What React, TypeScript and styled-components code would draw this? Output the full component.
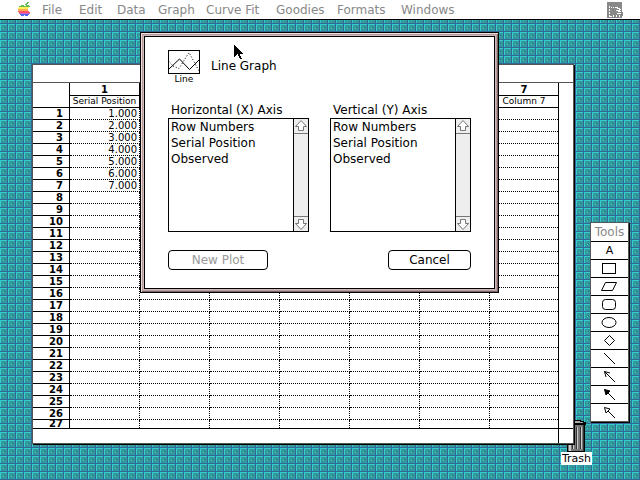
import React from 'react';
import styled, { createGlobalStyle } from 'styled-components';

const GlobalStyle = createGlobalStyle`
  * { box-sizing: border-box; }
  body { margin: 0; background: #339999; }
  button, select { font: inherit; color: inherit; }
`;

const uiFont = '"DejaVu Sans", sans-serif';

const tile = encodeURIComponent(
  '<svg xmlns="http://www.w3.org/2000/svg" width="8" height="8" shape-rendering="crispEdges">' +
    '<path fill="#339999" d="M0 0h8v8H0z"/>' +
    '<path fill="#33cccc" d="M0 0h7v1H0zM0 0h1v7H0z"/>' +
    '<path fill="#336699" d="M7 0h1v8H7zM0 7h8v1H0zM4 3h1v1H4z"/>' +
    '<path fill="#33cccc" d="M3 4h1v1H3z"/>' +
  '</svg>',
);

const Desktop = styled.div`
  position: relative;
  min-height: 100vh;
  overflow: hidden;
  font: 12px/16px ${uiFont};
  color: #000;
  background: #339999 url("data:image/svg+xml,${tile}") 0 0 / 8px 8px;
`;

const MenuBar = styled.nav`
  display: flex;
  align-items: center;
  height: 20px;
  padding: 0 17px 0 18px;
  background: #fff;
  border-bottom: 1px solid #000;
`;

const MenuButton = styled.button<{ $width: number }>`
  flex: 0 0 ${(p) => p.$width}px;
  padding: 0;
  border: 0;
  background: none;
  color: #888;
  text-align: left;
  white-space: nowrap;
`;

const AppleIcon = styled.svg`
  flex: none;
  margin-right: 11px;
`;

const AppIcon = styled.svg`
  flex: none;
  margin-left: auto;
`;

const DataWindow = styled.section`
  position: absolute;
  z-index: 2;
  left: 32px;
  top: 64px;
  right: 66px;
  bottom: 36px;
  display: flex;
  flex-direction: column;
  background: #fff;
  border: 1px solid #555;
  box-shadow: 1px 1px 0 #000;
`;

const WindowTitle = styled.header`
  flex: 0 0 18px;
  border-bottom: 1px solid #555;
`;

const SheetArea = styled.div`
  flex: 1;
  min-height: 0;
  display: flex;
  border-bottom: 1px solid #000;
`;

const SheetClip = styled.div`
  flex: 1;
  min-width: 0;
  overflow: hidden;
`;

const SideTrack = styled.div`
  flex: 0 0 15px;
  border-left: 1px solid #000;
`;

const BottomTrack = styled.footer`
  flex: 0 0 14px;
  display: flex;
  justify-content: flex-end;
`;

const Sheet = styled.table`
  width: 100%;
  table-layout: fixed;
  border-collapse: separate;
  border-spacing: 0;
  font-size: 10px;
  line-height: 11px;
  white-space: nowrap;
`;

const Col = styled.col<{ $width?: number }>`
  width: ${(p) => (p.$width ? `${p.$width}px` : 'auto')};
`;

const HeadCell = styled.th<{ $name?: boolean }>`
  height: ${(p) => (p.$name ? 12 : 13)}px;
  padding: 0;
  border-right: 1px solid #000;
  border-bottom: 1px solid #000;
  font-weight: ${(p) => (p.$name ? 400 : 700)};
  font-size: ${(p) => (p.$name ? 9 : 10)}px;
  text-align: center;
  &:last-child { border-right: 0; }
`;

const RowHead = styled.th`
  height: 12px;
  padding: 0 6px 0 0;
  border-right: 1px solid #000;
  border-bottom: 1px solid #000;
  text-align: right;
`;

const Cell = styled.td`
  height: 12px;
  padding: 0 2px 0 0;
  border-right: 1px dotted #000;
  border-bottom: 1px dotted #000;
  text-align: right;
  &:last-child { border-right: 0; }
`;

const SheetBody = styled.tbody`
  tr:last-child > * {
    height: 8px;
    border-bottom: 0;
    line-height: 8px;
  }
`;

const DialogFrame = styled.section`
  position: absolute;
  z-index: 3;
  left: 140px;
  top: 32px;
  right: 141px;
  padding: 3px;
  border: 1px solid #000;
  background: #bb9999;
  box-shadow:
    inset 1px 1px 0 #eedddd,
    inset -1px -1px 0 #776666;
`;

const DialogBody = styled.form`
  padding: 13px 23px 18px;
  background: #fff;
  border: 1px solid #000;
  outline: 1px solid #ccbbbb;
`;

const DialogHeading = styled.div`
  display: flex;
  gap: 11px;
  height: 51px;
`;

const PlotType = styled.figure`
  margin: 0;
  width: 32px;
  text-align: center;
  font-size: 9px;
  line-height: 10px;
  svg { display: block; }
`;

const DialogTitle = styled.h1`
  margin: 8px 0 0;
  font: inherit;
`;

const AxisRow = styled.div`
  display: flex;
  justify-content: space-between;
`;

const AxisLabel = styled.label`
  display: block;
  padding: 1px 0 0 3px;
`;

const ListBox = styled.div`
  display: flex;
  width: 141px;
  height: 114px;
  border: 1px solid #000;
`;

const AxisList = styled.select`
  flex: 1;
  min-width: 0;
  appearance: none;
  padding: 0;
  border: 0;
  outline: 0;
  border-radius: 0;
  background: #fff;
  overflow: hidden;
  option {
    height: 16px;
    min-height: 16px;
    padding: 1px 2px 0;
    line-height: 15px;
  }
`;

const ScrollTrack = styled.div`
  flex: 0 0 15px;
  display: flex;
  flex-direction: column;
  justify-content: space-between;
  border-left: 1px solid #000;
  background: #eee;
`;

const ScrollButton = styled.button<{ $down?: boolean }>`
  height: 15px;
  padding: 0;
  border: 0 solid #777;
  border-width: ${(p) => (p.$down ? '1px 0 0' : '0 0 1px')};
  background: #eee;
  svg {
    display: block;
    transform: ${(p) => (p.$down ? 'scaleY(-1)' : 'none')};
  }
`;

const ButtonRow = styled.div`
  display: flex;
  justify-content: space-between;
  margin-top: 18px;
`;

const PushButton = styled.button<{ $width: number }>`
  width: ${(p) => p.$width}px;
  height: 20px;
  padding: 0;
  border: 1px solid #000;
  border-radius: 4px;
  background: #fff;
  &:disabled { color: #999; }
`;

const Palette = styled.aside`
  position: absolute;
  z-index: 2;
  top: 222px;
  right: 11px;
  width: 39px;
  background: #fff;
  border: 1px solid #555;
  box-shadow: 1px 1px 0 #000;
`;

const PaletteTitle = styled.h2`
  margin: 0;
  height: 18px;
  font: 12px/18px ${uiFont};
  color: #888;
  text-align: center;
`;

const ToolButton = styled.button`
  display: block;
  width: 100%;
  height: 18px;
  padding: 0;
  border: 0;
  border-top: 1px solid #000;
  background: #fff;
  font-size: 11px;
  line-height: 17px;
  svg { display: block; }
`;

const TrashItem = styled.div`
  position: absolute;
  z-index: 1;
  right: 48px;
  bottom: 15px;
  display: flex;
  flex-direction: column;
  align-items: center;
  svg { display: block; }
`;

const TrashLabel = styled.span`
  padding: 0 1px;
  background: #fff;
  font-size: 11px;
  line-height: 13px;
`;

const Pointer = styled.svg`
  position: absolute;
  z-index: 4;
  left: 234px;
  top: 45px;
`;

const menus: [string, number][] = [
  ['File', 37], ['Edit', 38], ['Data', 41], ['Graph', 48],
  ['Curve Fit', 70], ['Goodies', 61], ['Formats', 64], ['Windows', 60],
];

const columnNames = ['Serial Position', '', '', '', '', '', 'Column 7'];
const rows = Array.from({ length: 27 }, (_, i) => i + 1);
const axisChoices = ['Row Numbers', 'Serial Position', 'Observed'];

const tools: { name: string; drawing: React.ReactNode }[] = [
  { name: 'Rectangle', drawing: <rect x="11.5" y="3.5" width="13" height="10" /> },
  { name: 'Parallelogram', drawing: <path d="M14.5 4.5H25.5L21.5 12.5H10.5Z" /> },
  { name: 'Rounded rectangle', drawing: <rect x="11.5" y="3.5" width="13" height="10" rx="3" /> },
  { name: 'Oval', drawing: <ellipse cx="18" cy="8.5" rx="7" ry="5" /> },
  { name: 'Diamond', drawing: <path d="M18.5 3.5L23.5 8.5L18.5 13.5L13.5 8.5Z" /> },
  { name: 'Line', drawing: <path d="M13 3L24 14" /> },
  { name: 'Arrow', drawing: <path d="M13.5 3.5L24 14M13.5 3.5L19 5M13.5 3.5L15 9" /> },
  { name: 'Solid arrow', drawing: <path d="M13.5 3.5L24 14M13.5 3.5L19 5L15 9Z" fill="#000" /> },
  { name: 'Hollow arrow', drawing: <path d="M17 7L24 14M13.5 3.5L19 5L17 7L15 9Z" /> },
];

function AxisPicker({ id, label }: { id: string; label: string }) {
  const arrow = (
    <svg width="14" height="14" viewBox="0 0 14 14" fill="#fff" stroke="#777">
      <path d="M7 1.5L12.5 7.5H9.5V11.5H4.5V7.5H1.5Z" />
    </svg>
  );
  return (
    <div>
      <AxisLabel htmlFor={id}>{label}</AxisLabel>
      <ListBox>
        <AxisList id={id} size={7}>
          {axisChoices.map((c) => <option key={c}>{c}</option>)}
        </AxisList>
        <ScrollTrack>
          <ScrollButton type="button" aria-label="Scroll up">{arrow}</ScrollButton>
          <ScrollButton type="button" aria-label="Scroll down" $down>{arrow}</ScrollButton>
        </ScrollTrack>
      </ListBox>
    </div>
  );
}

export default function App() {
  return (
    <Desktop>
      <GlobalStyle />
      <MenuBar>
        <AppleIcon width="13" height="15" viewBox="0 0 13 15" shapeRendering="crispEdges">
          <path fill="#66bb55" d="M7 2h1V1h1V0h2v1h-1v1H9v1H7zM3 3h3v1h2V3h3v1h1v1H1V4h2z" />
          <path fill="#ffee55" d="M1 5h10v1h-1v1H0V6h1z" />
          <path fill="#ffaa55" d="M0 7h10v2H0z" />
          <path fill="#ff5566" d="M0 9h11v1h1v1H1v-1H0z" />
          <path fill="#cc66cc" d="M1 11h11v1h-1v1H2v-1H1z" />
          <path fill="#5566ee" d="M2 12h9v1h-1v1H7v-1H6v1H3v-1H2z" />
        </AppleIcon>
        {menus.map(([name, width]) => (
          <MenuButton key={name} $width={width}>{name}</MenuButton>
        ))}
        <AppIcon width="16" height="16" viewBox="0 0 16 16" shapeRendering="crispEdges">
          <path fill="#888" d="M0 0h15v10h1v4h-1v2H0z" />
          <path fill="#fff" d="M2 4h1v2H2zM4 5h1v1H4zM6 5h1v1H6zM8 5h3v1H8zM2 7h1v2H2zM2 10h1v2H2zM2 13h1v2H2zM3 14h2v1H3zM6 13h1v2H6zM9 13h1v2H9zM12 13h1v2h-1zM10 6h3v1h-3zM12 7h2v1h-2zM9 8h4v1H9zM11 9h3v1h-3zM10 11h4v1h-4z" />
        </AppIcon>
      </MenuBar>

      <DataWindow>
        <WindowTitle />
        <SheetArea>
          <SheetClip>
            <Sheet>
              <colgroup>
                <Col $width={37} />
                {columnNames.map((_, i) => <Col key={i} $width={i < 6 ? 70 : undefined} />)}
              </colgroup>
              <thead>
                <tr>
                  <HeadCell as="td" rowSpan={2} />
                  {columnNames.map((_, i) => <HeadCell key={i}>{i + 1}</HeadCell>)}
                </tr>
                <tr>
                  {columnNames.map((name, i) => <HeadCell key={i} $name>{name}</HeadCell>)}
                </tr>
              </thead>
              <SheetBody>
                {rows.map((n) => (
                  <tr key={n}>
                    <RowHead>{n}</RowHead>
                    {columnNames.map((_, i) => (
                      <Cell key={i}>{i === 0 && n <= 7 ? n.toFixed(3) : ''}</Cell>
                    ))}
                  </tr>
                ))}
              </SheetBody>
            </Sheet>
          </SheetClip>
          <SideTrack />
        </SheetArea>
        <BottomTrack><SideTrack /></BottomTrack>
      </DataWindow>

      <DialogFrame>
        <DialogBody onSubmit={(e) => e.preventDefault()}>
          <DialogHeading>
            <PlotType>
              <svg width="32" height="24" viewBox="0 0 32 24" fill="none" stroke="#000">
                <rect x="0.5" y="0.5" width="31" height="23" />
                <path d="M1 19L11.5 9L21.5 19.5L31 10" />
                <path d="M1 11.5L5 16L11 18.5L21 2.5L31 21" strokeDasharray="1 2" />
              </svg>
              <figcaption>Line</figcaption>
            </PlotType>
            <DialogTitle>Line Graph</DialogTitle>
          </DialogHeading>
          <AxisRow>
            <AxisPicker id="x-axis" label="Horizontal (X) Axis" />
            <AxisPicker id="y-axis" label="Vertical (Y) Axis" />
          </AxisRow>
          <ButtonRow>
            <PushButton $width={100} disabled>New Plot</PushButton>
            <PushButton $width={83} type="button">Cancel</PushButton>
          </ButtonRow>
        </DialogBody>
      </DialogFrame>

      <Palette>
        <PaletteTitle>Tools</PaletteTitle>
        <ToolButton>A</ToolButton>
        {tools.map((tool) => (
          <ToolButton key={tool.name} aria-label={tool.name}>
            <svg width="37" height="17" viewBox="0 0 37 17" fill="none" stroke="#000">
              {tool.drawing}
            </svg>
          </ToolButton>
        ))}
      </Palette>

      <TrashItem>
        <svg width="20" height="32" viewBox="0 0 20 32" shapeRendering="crispEdges">
          <path fill="#000" d="M5 0h10v1h3v1h2v3h-1v27H1V5H0V2h2V1h3z" />
          <path fill="#aaa" d="M5 1h9v1h3v1H2V2h3z" />
          <path fill="#777" d="M2 5h16v26H2z" />
          <path fill="#ccc" d="M3 5h2v26H3zM7 7h1v22H7zM11 7h1v22h-1zM15 7h1v22h-1z" />
          <path fill="#333" d="M6 7h1v22H6zM10 7h1v22h-1zM14 7h1v22h-1zM17 5h1v26h-1z" />
        </svg>
        <TrashLabel>Trash</TrashLabel>
      </TrashItem>

      <Pointer width="10" height="15" viewBox="0 0 10 15" shapeRendering="crispEdges">
        <path d="M0 0h1v1h1v1h1v1h1v1h1v1h1v1h1v1h1v1h1v1H6v2h1v2h1v1H6v-1H5v-2H4V9H3v1H2v1H1v1H0z" />
      </Pointer>
    </Desktop>
  );
}
